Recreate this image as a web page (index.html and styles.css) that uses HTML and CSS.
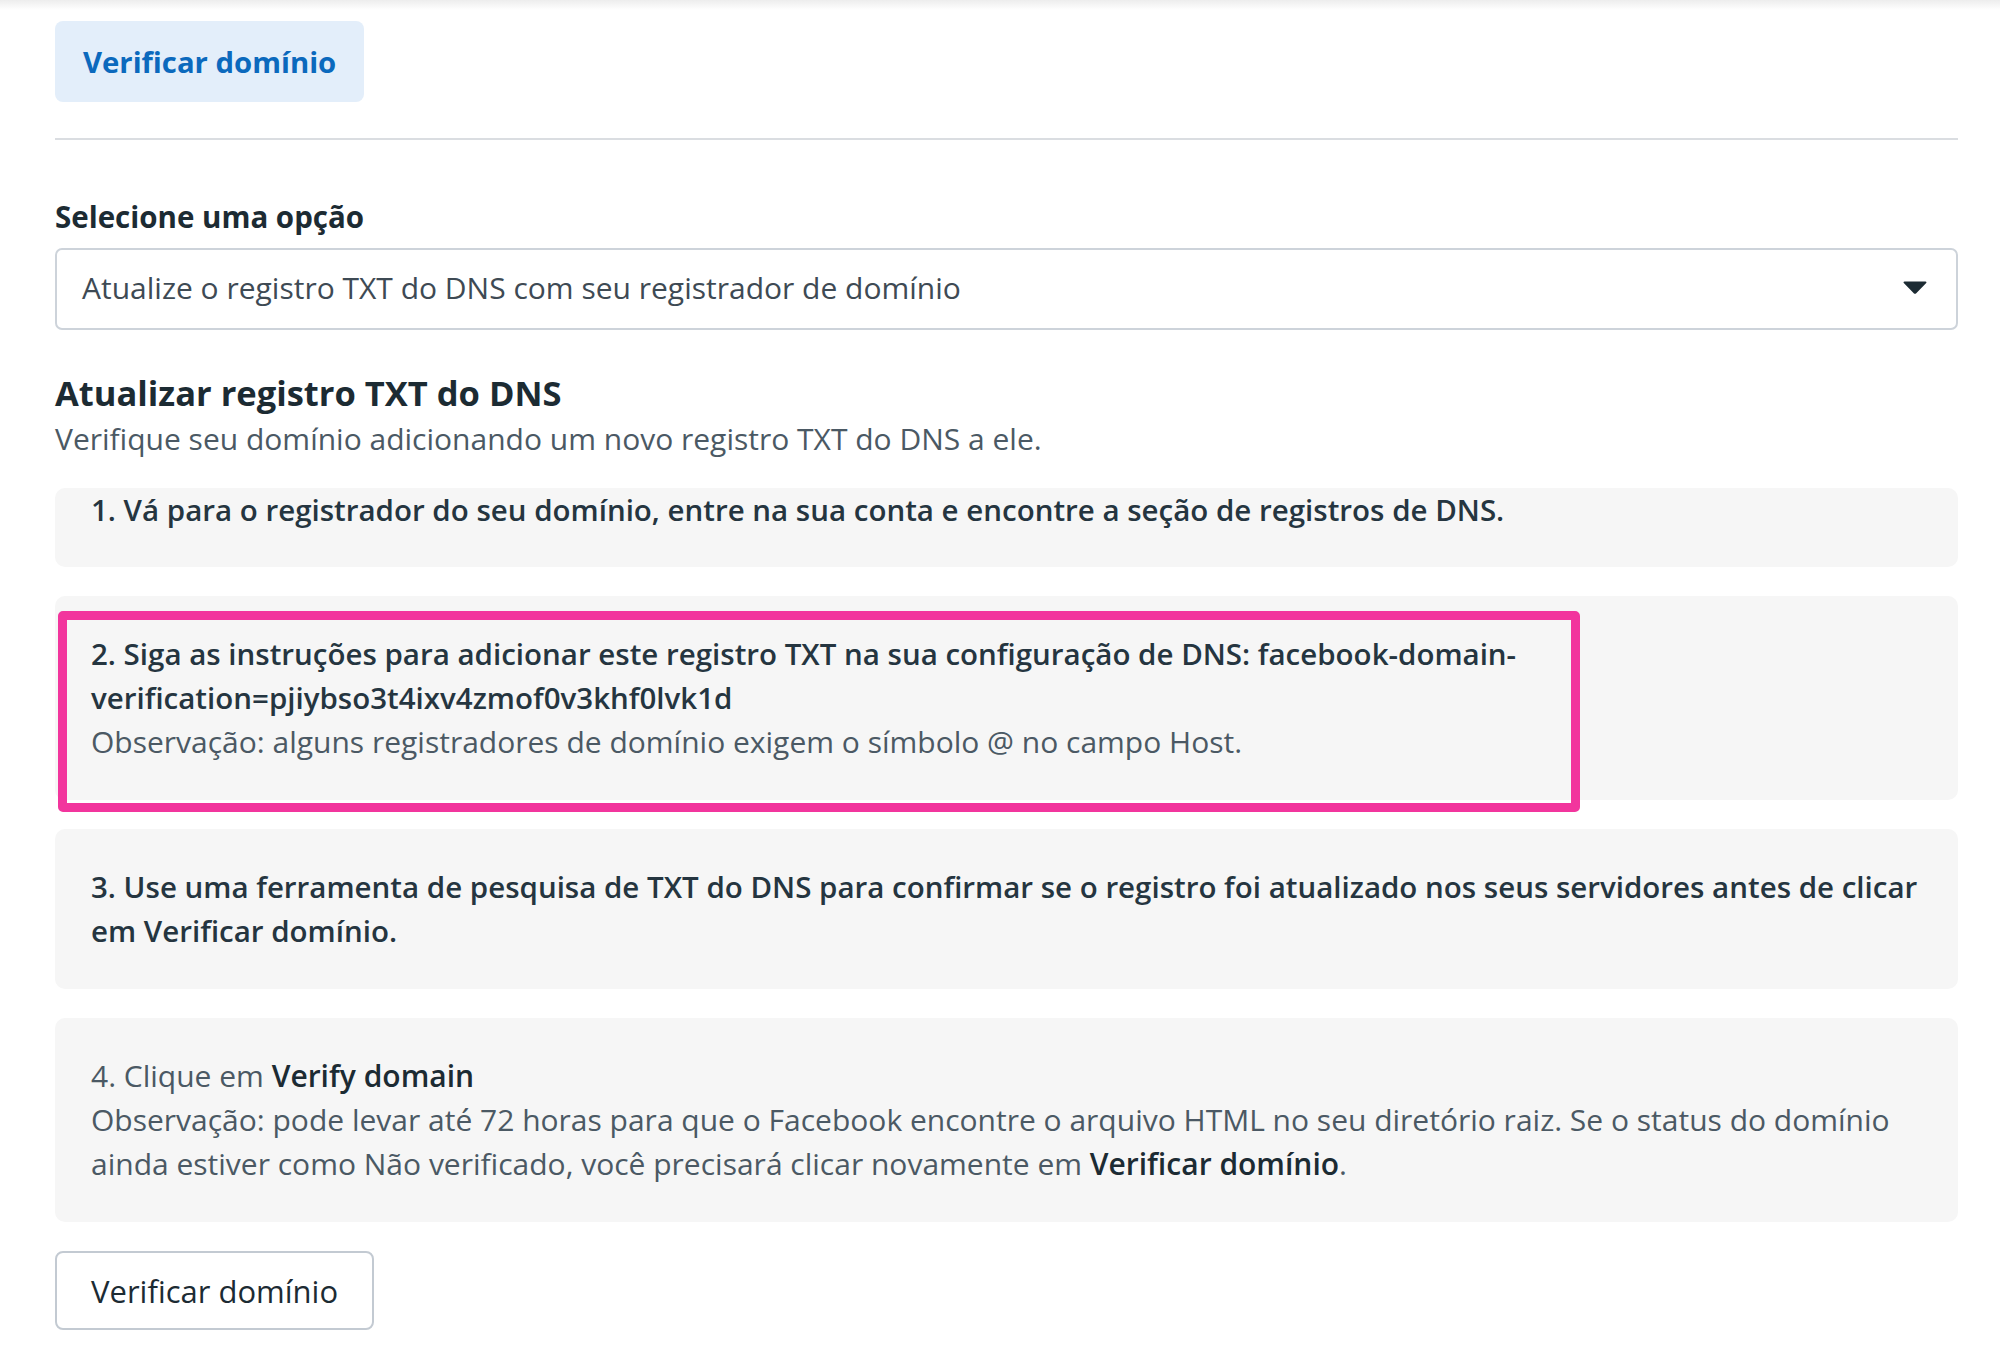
FILE: index.html
```html
<!DOCTYPE html>
<html lang="pt-BR">

<head>
  <meta charset="UTF-8">
  <title>Verificar domínio</title>
  <link rel="stylesheet" href="styles.css">
</head>

<body>
  <div class="top-shadow"></div>
  <div class="page">
    <button class="btn-primary">Verificar domínio</button>
    <hr class="divider">

    <label class="field-label">Selecione uma opção</label>
    <div class="select-box">
      <span>Atualize o registro TXT do DNS com seu registrador de domínio</span>
      <svg class="caret" width="24" height="15" viewBox="0 0 24 15"><path d="M1.5 1.5h21c.9 0 1.3 1 .7 1.6l-10.2 10.3c-.6.6-1.4.6-2 0L.8 3.1C.2 2.5.6 1.5 1.5 1.5z" fill="#1c2b33"/></svg>
    </div>

    <h2 class="section-title">Atualizar registro TXT do DNS</h2>
    <p class="section-sub">Verifique seu domínio adicionando um novo registro TXT do DNS a ele.</p>

    <div class="steps">
      <div class="step step-first">
        <p class="step-main">1. Vá para o registrador do seu domínio, entre na sua conta e encontre a seção de registros de DNS.</p>
      </div>
      <div class="step">
        <p class="step-main">2. Siga as instruções para adicionar este registro TXT na sua configuração de DNS: facebook-domain-verification=pjiybso3t4ixv4zmof0v3khf0lvk1d</p>
        <p class="step-note">Observação: alguns registradores de domínio exigem o símbolo @ no campo Host.</p>
        <div class="highlight"></div>
      </div>
      <div class="step">
        <p class="step-main">3. Use uma ferramenta de pesquisa de TXT do DNS para confirmar se o registro foi atualizado nos seus servidores antes de clicar em Verificar domínio.</p>
      </div>
      <div class="step">
        <p class="step-note">4. Clique em <strong>Verify domain</strong></p>
        <p class="step-note">Observação: pode levar até 72 horas para que o Facebook encontre o arquivo HTML no seu diretório raiz. Se o status do domínio ainda estiver como Não verificado, você precisará clicar novamente em <strong>Verificar domínio</strong>.</p>
      </div>
    </div>

    <button class="btn-secondary">Verificar domínio</button>
  </div>
</body>

</html>
```

FILE: styles.css
```css
body {
  margin: 0;
  padding: 0;
  background-color: #FFFFFF;
  font-family: 'Open Sans', 'Noto Sans', sans-serif;
  color: #1c2b33;
}

.top-shadow {
  height: 10px;
  background: linear-gradient(#ededed, #ffffff);
}

.page {
  padding: 11px 42px 0 55px;
}

.btn-primary {
  display: block;
  height: 81px;
  padding: 0 28px;
  border: none;
  border-radius: 8px;
  background-color: #e3eefa;
  color: #0b69bd;
  font-family: inherit;
  font-size: 29.3px;
  font-weight: 700;
}

.divider {
  margin: 36px 0 0 0;
  border: none;
  height: 2px;
  background-color: #dadde1;
}

.field-label {
  display: block;
  margin-top: 57px;
  font-size: 29.5px;
  font-weight: 700;
  line-height: 40px;
}

.select-box {
  margin-top: 11px;
  height: 75px;
  border: 2px solid #cdd3da;
  border-radius: 7px;
  display: flex;
  align-items: center;
  justify-content: space-between;
  padding: 0 29px 3px 25px;
  font-size: 30px;
  color: #3e4a54;
}

.section-title {
  margin: 41px 0 0 0;
  font-size: 34.5px;
  font-weight: 700;
  line-height: 44px;
}

.section-sub {
  margin: 4px 0 0 0;
  font-size: 30px;
  line-height: 40px;
  color: #4b5964;
}

.steps {
  margin-top: 29px;
  display: flex;
  flex-direction: column;
  gap: 29px;
}

.step {
  position: relative;
  background-color: #f6f6f6;
  border-radius: 10px;
  padding: 36px 25px 36px 36px;
}

.step-first {
  padding-top: 0;
  padding-bottom: 35px;
}

.step p {
  margin: 0;
  font-size: 30px;
  line-height: 44px;
}

.step .step-main {
  font-size: 29.5px;
  font-weight: 600;
  color: #253540;
}

.step-note {
  color: #4b5964;
}

.step-note strong {
  font-weight: 600;
  color: #1c2b33;
}

.highlight {
  position: absolute;
  left: 3px;
  top: 15px;
  width: 1504px;
  height: 183px;
  border: 9px solid #f2359d;
  border-radius: 5px;
}

.btn-secondary {
  display: block;
  margin-top: 29px;
  height: 79px;
  padding: 0 34px;
  border: 2px solid #c3cad2;
  border-radius: 8px;
  background-color: #FFFFFF;
  color: #1c2b33;
  font-family: inherit;
  font-size: 31px;
}
```
